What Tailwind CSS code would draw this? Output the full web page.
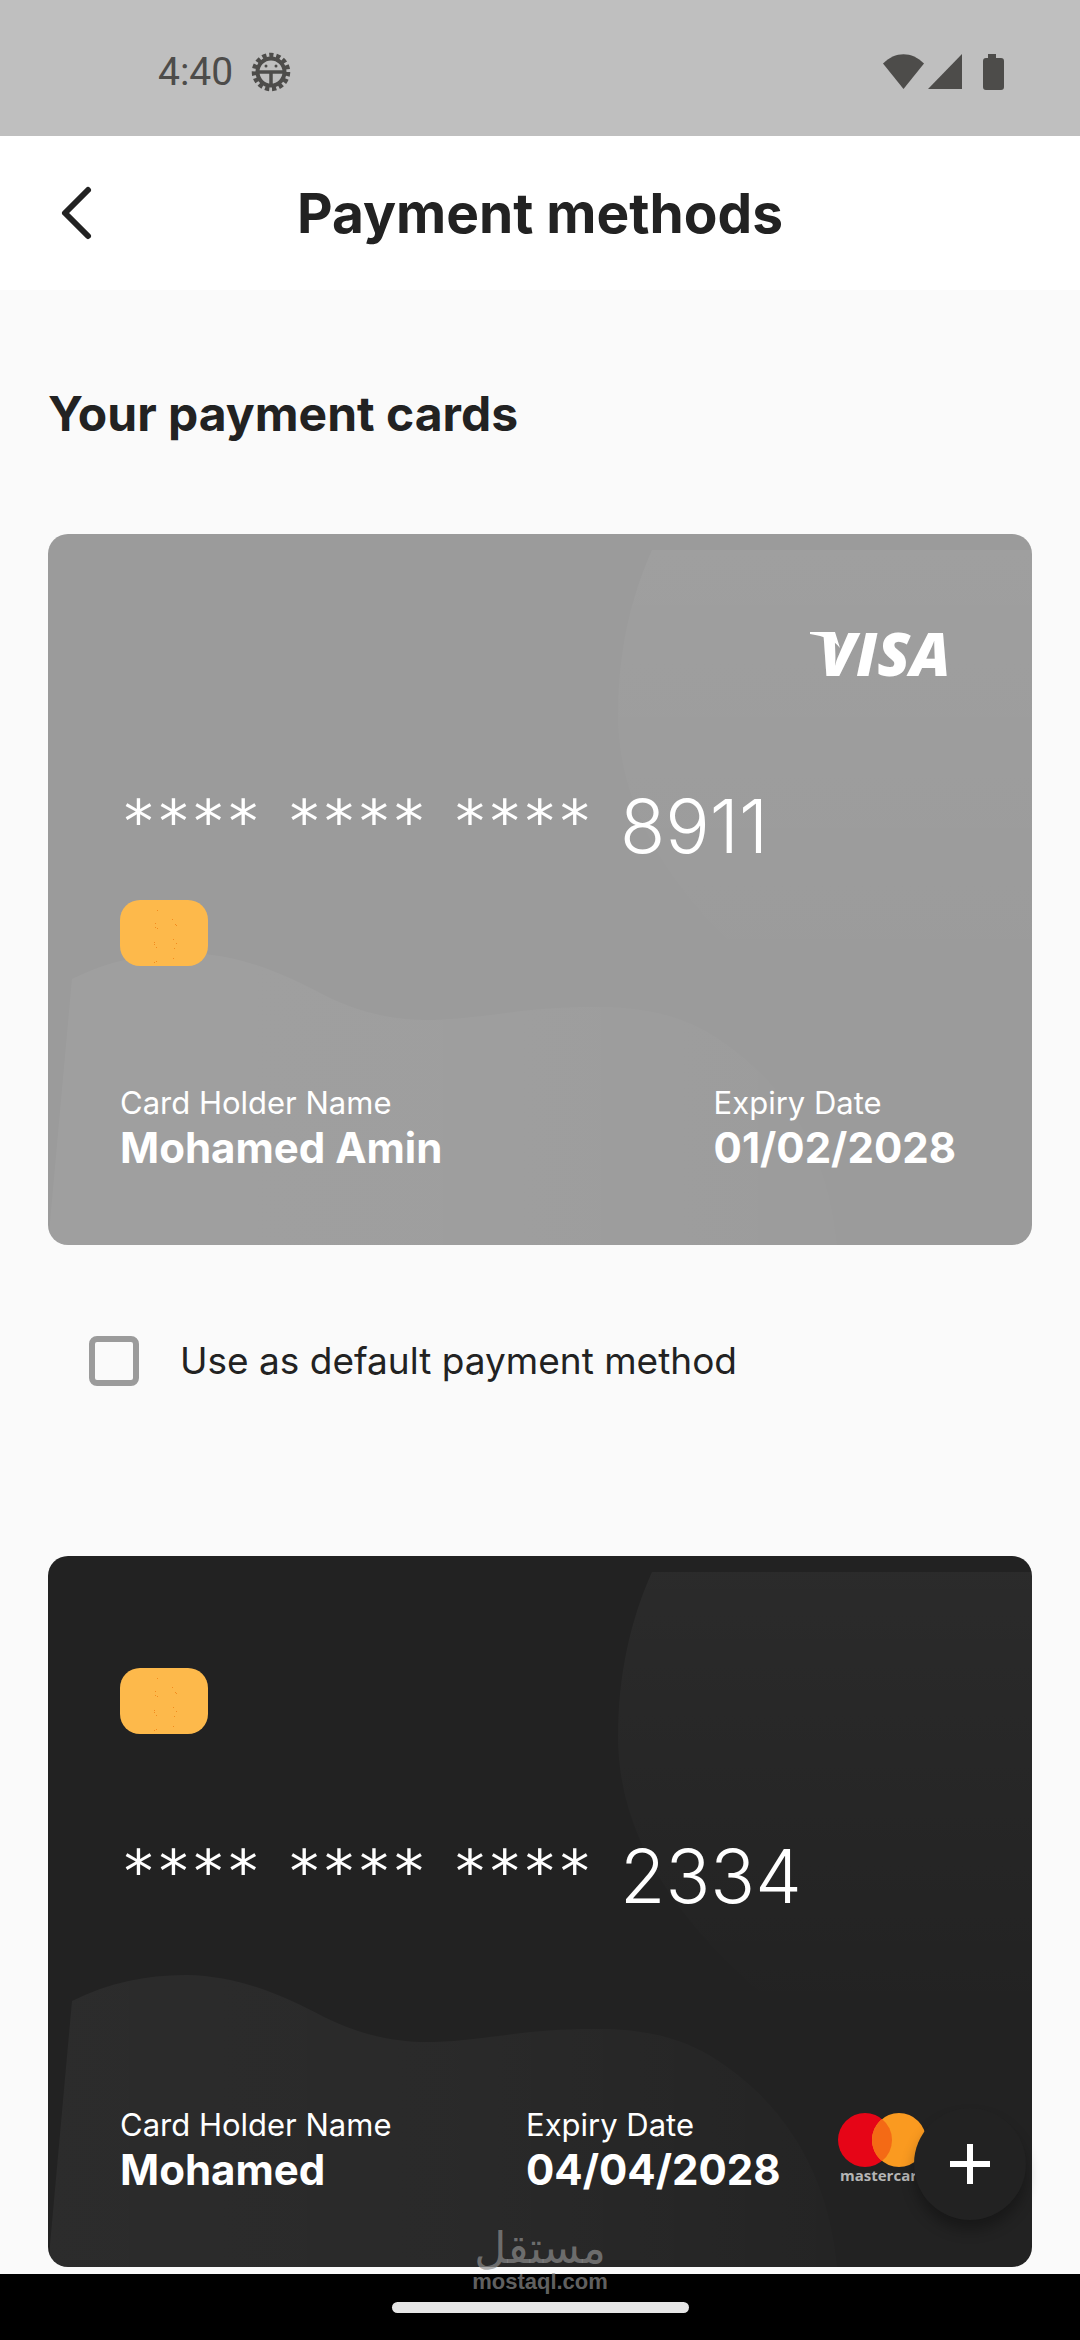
<!DOCTYPE html>
<html lang="en">
<head>
<meta charset="utf-8">
<meta name="viewport" content="width=device-width, initial-scale=1">
<title>Payment methods</title>
<script src="https://cdn.jsdelivr.net/npm/@tailwindcss/browser@4"></script>
</head>
<body class="relative flex min-h-screen flex-col bg-[#fafafa] font-['Inter','Open_Sans',sans-serif] text-[#222222]">

  <!-- System status bar -->
  <div class="flex h-[136px] items-center justify-between bg-[#bfbfbf] pl-[158px] pr-[76px] pt-2 text-[#4d4c4a]">
    <div class="flex items-center gap-[18px]">
      <span class="font-[Roboto,sans-serif] text-[39px] leading-10">4:40</span>
      <svg class="size-10" viewBox="0 0 40 40" fill="none" stroke="currentColor">
        <circle cx="20" cy="20" r="17" stroke-width="4.500" pathLength="60" stroke-dasharray="2.4 1.6"/>
        <circle cx="20" cy="20" r="13.500" stroke-width="4"/>
        <path d="M7 20h26" stroke-width="3.500"/>
        <path d="M20 21v12" stroke-width="3.500"/>
        <circle cx="15" cy="14" r="1.500" fill="currentColor" stroke="none"/>
        <circle cx="25" cy="14" r="1.500" fill="currentColor" stroke="none"/>
      </svg>
    </div>
    <svg class="h-9 w-[121px]" viewBox="0 0 121 36" fill="currentColor">
      <path d="M0 9.500C12-3 29-3 41 9.500L20.500 35Z"/>
      <path d="M79 0V35H45Z"/>
      <path d="M105 0h8v4h5q3 0 3 3v26q0 3-3 3h-15q-3 0-3-3V7q0-3 3-3h2Z"/>
    </svg>
  </div>

  <header class="grid h-[154px] grid-cols-[1fr_auto_1fr] items-center bg-white px-12">
    <button type="button" aria-label="Back" class="flex h-16 w-14 items-center justify-center">
      <svg class="h-14 w-9" viewBox="0 0 36 56" fill="none" stroke="currentColor" stroke-width="6" stroke-linecap="round" stroke-linejoin="round"><path d="M30 5L7 28L30 51"/></svg>
    </button>
    <h1 class="text-[55px] font-bold leading-[64px]">Payment methods</h1>
  </header>

  <main class="flex flex-1 flex-col px-12 pb-[7px] pt-24">
    <h2 class="text-[48px] font-bold leading-[56px]">Your payment cards</h2>

    <section class="relative mt-[92px] overflow-hidden rounded-[20px] bg-[#9b9b9b] pb-[71px] pl-[72px] pr-[72px] pt-[88px] text-white">
      <svg class="absolute inset-0 size-full" viewBox="0 0 984 711" preserveAspectRatio="none" aria-hidden="true">
        <defs>
          <linearGradient id="disc" x1="0" y1="0" x2="0" y2="1"><stop offset="0" stop-color="#fff" stop-opacity=".04"/><stop offset="1" stop-color="#fff" stop-opacity="0"/></linearGradient>
          <linearGradient id="wave" x1="0" y1="0" x2="1" y2="0"><stop offset="0" stop-color="#fff" stop-opacity=".045"/><stop offset=".5" stop-color="#fff" stop-opacity=".035"/><stop offset="1" stop-color="#fff" stop-opacity="0.010"/></linearGradient>
        </defs>
        <path fill="url(#disc)" d="M604 16H984V460H740C640 380 570 290 570 180C570 120 582 65 604 16Z"/>
        <path fill="url(#wave)" d="M24 445C60 427 98 419 138 419C192 420 234 439 276 461C310 478 345 487 386 486C440 484 475 473 544 473C595 472 632 482 661 499C735 544 780 615 789 711H2V689Z"/>
      </svg>
      <div class="relative flex flex-col">
        <svg class="h-14 w-[150px] self-end overflow-visible" viewBox="0 0 150 56" role="img" aria-label="Visa">
          <path fill="#fff" d="M0 10h25l5 16q-8-11-30-14Z"/>
          <text x="9" y="54" fill="#fff" class="font-['Open_Sans',sans-serif] text-[60px] font-extrabold italic">VISA</text>
        </svg>
        <div class="mt-[108px] flex h-20 gap-7 text-[74px] font-light leading-20">
          <div class="flex gap-[26px] pl-px font-['DejaVu_Sans_Mono',monospace] text-[58px] font-normal leading-[72px]"><span>****</span><span>****</span><span>****</span></div><span>8911</span>
        </div>
        <svg class="mt-[34px] h-[66px] w-[88px]" viewBox="0 0 88 66" aria-hidden="true">
          <rect width="88" height="66" rx="20" fill="#fdb94b"/>
          <path fill="#f28c1e" d="M37 10h1v1h-1zM52 19h1v1h-1zM35 23h1v1h-1zM55 24h1v1h-1zM56 25h1v1h-1zM35 27h1v1h-1zM37 28h1v1h-1zM53 39h1v1h-1zM34 42h1v1h-1zM34 44h1v1h-1zM56 43h1v1h-1zM36 47h1v1h-1zM54 48h1v1h-1zM53 58h1v1h-1zM36 61h1v1h-1zM34 62h1v1h-1z"/>
        </svg>
        <dl class="mt-[118px] flex justify-between pr-1">
          <div><dt class="text-[31px] leading-[38px]">Card Holder Name</dt><dd class="text-[42px] font-bold leading-[52px]">Mohamed Amin</dd></div>
          <div><dt class="text-[31px] leading-[38px]">Expiry Date</dt><dd class="text-[42px] font-bold leading-[52px]">01/02/2028</dd></div>
        </dl>
      </div>
    </section>

    <label class="mt-[84px] flex h-16 items-center gap-[41px] pl-[41px] text-[37px]">
      <input type="checkbox" class="size-[50px] appearance-none rounded-lg border-[6px] border-[#9b9b9b] checked:bg-[#222222]">
      Use as default payment method
    </label>

    <section class="relative mt-[163px] overflow-hidden rounded-[20px] bg-[#222222] pb-[71px] pl-[72px] pr-[108px] pt-28 text-white">
      <svg class="absolute inset-0 size-full" viewBox="0 0 984 711" preserveAspectRatio="none" aria-hidden="true">
        <path fill="url(#disc)" d="M604 16H984V460H740C640 380 570 290 570 180C570 120 582 65 604 16Z"/>
        <path fill="url(#wave)" d="M24 445C60 427 98 419 138 419C192 420 234 439 276 461C310 478 345 487 386 486C440 484 475 473 544 473C595 472 632 482 661 499C735 544 780 615 789 711H2V689Z"/>
      </svg>
      <div class="relative flex flex-col">
        <svg class="h-[66px] w-[88px]" viewBox="0 0 88 66" aria-hidden="true">
          <rect width="88" height="66" rx="20" fill="#fdb94b"/>
          <path fill="#f28c1e" d="M37 10h1v1h-1zM52 19h1v1h-1zM35 23h1v1h-1zM55 24h1v1h-1zM56 25h1v1h-1zM35 27h1v1h-1zM37 28h1v1h-1zM53 39h1v1h-1zM34 42h1v1h-1zM34 44h1v1h-1zM56 43h1v1h-1zM36 47h1v1h-1zM54 48h1v1h-1zM53 58h1v1h-1zM36 61h1v1h-1zM34 62h1v1h-1z"/>
        </svg>
        <div class="mt-[102px] flex h-20 gap-7 text-[74px] font-light leading-20">
          <div class="flex gap-[26px] pl-px font-['DejaVu_Sans_Mono',monospace] text-[58px] font-normal leading-[72px]"><span>****</span><span>****</span><span>****</span></div><span>2334</span>
        </div>
        <div class="mt-[190px] flex items-start">
          <dl class="flex flex-1">
            <div class="w-[406px]"><dt class="text-[31px] leading-[38px]">Card Holder Name</dt><dd class="text-[42px] font-bold leading-[52px]">Mohamed</dd></div>
            <div><dt class="text-[31px] leading-[38px]">Expiry Date</dt><dd class="text-[42px] font-bold leading-[52px]">04/04/2028</dd></div>
          </dl>
          <svg class="mt-1.5 h-[74px] w-[86px] overflow-visible" viewBox="0 0 86 74" role="img" aria-label="Mastercard">
            <circle cx="27" cy="28" r="27" fill="#e60517"/>
            <circle cx="61" cy="28" r="27" fill="#fa9a20"/>
            <path d="M44 7a27 27 0 0 1 0 42a27 27 0 0 1 0-42Z" fill="#f46a15"/>
            <text x="2" y="69" fill="#b5b5b5" class="font-['Open_Sans',sans-serif] text-[15px] font-bold">mastercard</text>
          </svg>
        </div>
      </div>
    </section>
  </main>

  <!-- System navigation bar -->
  <div class="flex h-[66px] items-center justify-center bg-black">
    <div class="h-[11px] w-[297px] rounded-full bg-[#e6e6e6]"></div>
  </div>

  <button type="button" aria-label="Add payment card" class="absolute bottom-[120px] right-[54px] flex size-28 items-center justify-center rounded-full bg-[#222222] text-white shadow-[0_10px_14px_0_rgba(0,0,0,0.3)]">
    <svg class="size-10" viewBox="0 0 40 40" stroke="currentColor" stroke-width="6"><path d="M20 0V40M0 20H40"/></svg>
  </button>

  <div class="pointer-events-none absolute inset-x-0 bottom-[44px] flex flex-col items-center text-[#8c8c8c]/70">
    <span lang="ar" dir="rtl" class="font-['DejaVu_Sans',sans-serif] text-[44px] leading-10">مستقل</span>
    <span class="font-['Liberation_Sans',sans-serif] text-[22px] font-bold leading-7">mostaql.com</span>
  </div>
</body>
</html>
